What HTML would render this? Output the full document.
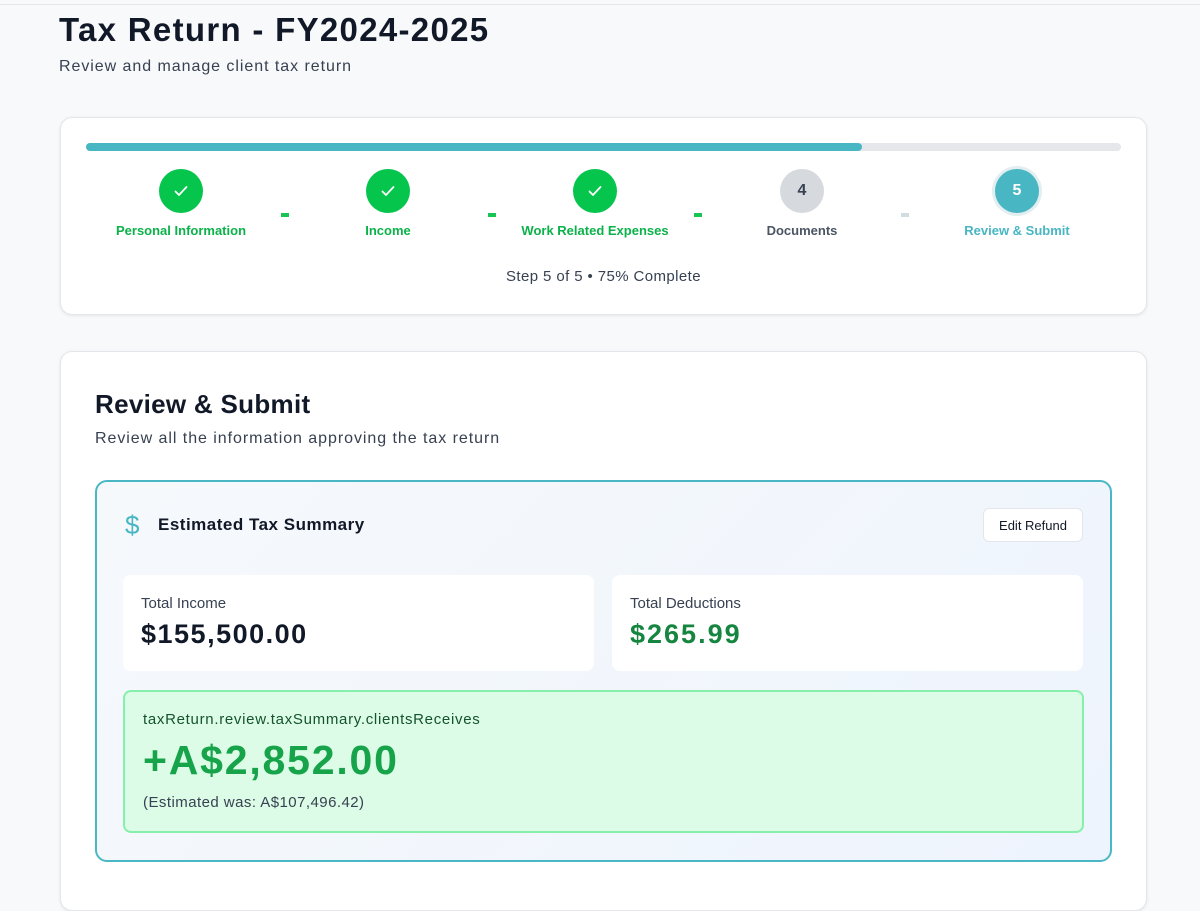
<!DOCTYPE html><html><head><style>
*{box-sizing:border-box;margin:0;padding:0}
body{width:1200px;height:876px;overflow:hidden;background:#f8f9fb;font-family:"Liberation Sans",sans-serif;position:relative;color:#111827}
.abs{position:absolute}
.card{position:absolute;left:60px;width:1087px;background:#fff;border:1px solid #e3e6ea;border-radius:12px;box-shadow:0 1px 3px rgba(0,0,0,.08)}
.circ{position:absolute;width:44px;height:44px;border-radius:50%;top:169px;display:flex;align-items:center;justify-content:center;font-weight:bold;font-size:16px}
.lbl{position:absolute;top:223px;width:200px;text-align:center;font-size:13px;font-weight:bold}
.dash{position:absolute;top:213px;width:8px;height:4px;background:#16c552}
</style></head><body>
<div class="abs" style="left:0;top:4px;width:1200px;height:1px;background:#e5e7eb"></div>
<div class="abs" style="left:59px;top:11px;font-size:33px;font-weight:bold;color:#111827;letter-spacing:1.3px">Tax Return - FY2024-2025</div>
<div class="abs" style="left:59px;top:58px;font-size:16px;color:#374151;letter-spacing:0.95px">Review and manage client tax return</div>
<div class="card" style="top:117px;height:198px"></div>
<div class="abs" style="left:86px;top:143px;width:1035px;height:8px;border-radius:4px;background:#e5e7eb"></div>
<div class="abs" style="left:86px;top:143px;width:776px;height:8px;border-radius:4px;background:#48b6c3"></div>
<div class="circ" style="left:159px;background:#05c54c"><svg width="18" height="18" viewBox="0 0 18 18"><path d="M3.5 9.5l3.5 3.5 7.5-8" fill="none" stroke="#fff" stroke-width="1.8" stroke-linecap="round" stroke-linejoin="round"/></svg></div>
<div class="circ" style="left:366px;background:#05c54c"><svg width="18" height="18" viewBox="0 0 18 18"><path d="M3.5 9.5l3.5 3.5 7.5-8" fill="none" stroke="#fff" stroke-width="1.8" stroke-linecap="round" stroke-linejoin="round"/></svg></div>
<div class="circ" style="left:573px;background:#05c54c"><svg width="18" height="18" viewBox="0 0 18 18"><path d="M3.5 9.5l3.5 3.5 7.5-8" fill="none" stroke="#fff" stroke-width="1.8" stroke-linecap="round" stroke-linejoin="round"/></svg></div>
<div class="circ" style="left:780px;background:#d6dade;color:#374151">4</div>
<div class="circ" style="left:995px;background:#48b6c3;color:#fff;box-shadow:0 0 0 3px #e2eef0">5</div>
<div class="lbl" style="left:81px;color:#0bb24a">Personal Information</div>
<div class="lbl" style="left:288px;color:#0bb24a">Income</div>
<div class="lbl" style="left:495px;color:#0bb24a">Work Related Expenses</div>
<div class="lbl" style="left:702px;color:#4b5563">Documents</div>
<div class="lbl" style="left:917px;color:#48b6c3">Review &amp; Submit</div>
<div class="dash" style="left:281px"></div><div class="dash" style="left:488px"></div><div class="dash" style="left:694px"></div><div class="dash" style="left:901px;background:#d1dde0"></div>
<div class="abs" style="left:0;width:1207px;top:268px;text-align:center;font-size:15px;color:#374151;letter-spacing:0.4px">Step 5 of 5 • 75% Complete</div>
<div class="card" style="top:351px;height:560px"></div>
<div class="abs" style="left:95px;top:389px;font-size:26px;font-weight:bold;letter-spacing:0.3px">Review &amp; Submit</div>
<div class="abs" style="left:95px;top:430px;font-size:16px;color:#374151;letter-spacing:0.95px">Review all the information approving the tax return</div>
<div class="abs" style="left:95px;top:480px;width:1017px;height:382px;border:2px solid #4ab8c4;border-radius:12px;background:linear-gradient(135deg,#f6f9fc,#eef4fd)"></div>
<div class="abs" style="left:125px;top:511px;font-size:26px;color:#48b6c3;line-height:28px">$</div>
<div class="abs" style="left:158px;top:515px;font-size:17px;font-weight:bold;letter-spacing:0.5px">Estimated Tax Summary</div>
<div class="abs" style="left:983px;top:508px;width:100px;height:34px;background:#fff;border:1px solid #e3e6ea;border-radius:6px;font-size:13px;display:flex;align-items:center;justify-content:center">Edit Refund</div>
<div class="abs" style="left:123px;top:575px;width:471px;height:96px;background:#fff;border-radius:8px"></div>
<div class="abs" style="left:612px;top:575px;width:471px;height:96px;background:#fff;border-radius:8px"></div>
<div class="abs" style="left:141px;top:595px;font-size:15px;color:#374151">Total Income</div>
<div class="abs" style="left:141px;top:619px;font-size:27px;font-weight:bold;letter-spacing:1.5px">$155,500.00</div>
<div class="abs" style="left:630px;top:595px;font-size:15px;color:#374151">Total Deductions</div>
<div class="abs" style="left:630px;top:619px;font-size:27px;font-weight:bold;color:#15853f;letter-spacing:2px">$265.99</div>
<div class="abs" style="left:123px;top:690px;width:961px;height:143px;background:#dcfce7;border:2px solid #86efac;border-radius:8px"></div>
<div class="abs" style="left:143px;top:711px;font-size:15px;color:#14532d;letter-spacing:0.7px">taxReturn.review.taxSummary.clientsReceives</div>
<div class="abs" style="left:143px;top:737px;font-size:41px;font-weight:bold;color:#16a34a;letter-spacing:1.8px">+A$2,852.00</div>
<div class="abs" style="left:143px;top:794px;font-size:15px;color:#374151;letter-spacing:0.45px">(Estimated was: A$107,496.42)</div>
</body></html>
